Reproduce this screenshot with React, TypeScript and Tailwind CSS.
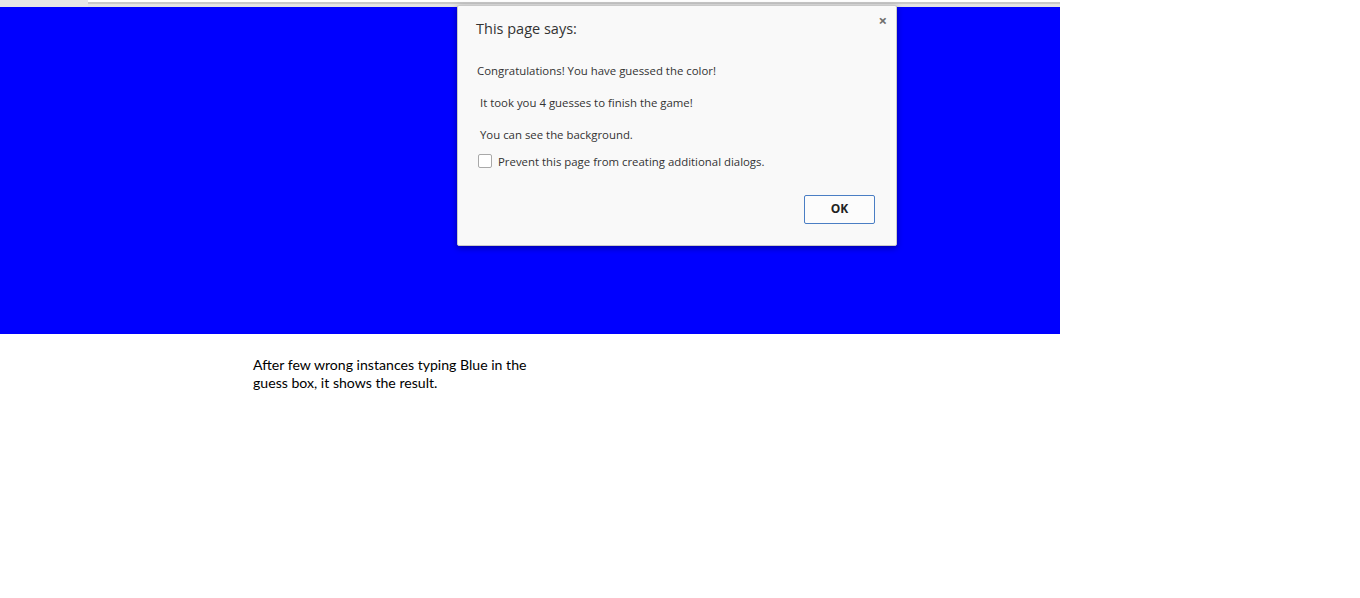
import { useState } from 'react';

function AlertDialog() {
  const [prevent, setPrevent] = useState(false);

  return (
    <div className="absolute left-[457px] top-[5px] w-[440px] h-[241px] bg-[#f9f9f9] border border-[#c9c9c9] rounded-[2px] shadow-[0_2px_6px_rgba(0,0,0,0.35)] text-[#333] font-['Open_Sans',sans-serif]">
      <button className="absolute right-[9px] top-[7px] text-[#6f6f6f] text-[15px] leading-none font-bold">×</button>
      <div className="pl-[18px] pt-[12px] text-[14.5px] text-[#333]">This page says:</div>
      <div className="pl-[19px] pt-[23px] text-[11.4px] leading-[16px]">
        <p>Congratulations! You have guessed the color!</p>
        <p className="pt-[16px] pl-[3px]">It took you 4 guesses to finish the game!</p>
        <p className="pt-[16px] pl-[3px]">You can see the background.</p>
      </div>
      <label className="flex items-center gap-[6px] pl-[20px] pt-[10px] text-[11.4px]">
        <span
          onClick={() => setPrevent(!prevent)}
          className="w-[14px] h-[14px] border border-[#a9a9a9] rounded-[2px] bg-white flex items-center justify-center text-[10px]"
        >
          {prevent ? '✓' : ''}
        </span>
        Prevent this page from creating additional dialogs.
      </label>
      <div className="flex justify-end pr-[21px] pt-[25px]">
        <button className="w-[71px] h-[29px] border border-[#4a7ec4] rounded-[2px] bg-[#fcfcfc] text-[12px] font-bold text-[#222]">
          OK
        </button>
      </div>
    </div>
  );
}

export default function App() {
  return (
    <div className="relative w-[1360px] h-[598px] bg-white overflow-hidden">
      <div className="flex h-[7px]">
        <div className="w-[88px] bg-[#e6e6e6]" />
        <div className="w-[972px] flex flex-col">
          <div className="h-[2px] bg-white" />
          <div className="h-[2px] bg-[#c8c8c8]" />
          <div className="flex-1 bg-[#e3e3e3]" />
        </div>
      </div>
      <div className="w-[1060px] h-[327px] bg-[#0000ff]" />
      <div className="pl-[253px] pt-[22px] text-[14.1px] leading-[18px] text-black font-['Lato',sans-serif]">
        <p>After few wrong instances typing Blue in the</p>
        <p>guess box, it shows the result.</p>
      </div>
      <AlertDialog />
    </div>
  );
}
